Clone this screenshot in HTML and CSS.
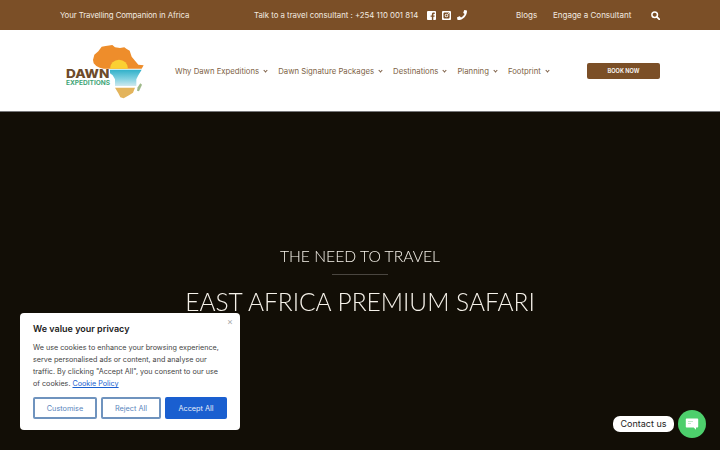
FILE: index.html
```html
<!DOCTYPE html>
<html lang="en">
<head>
    <meta charset="UTF-8">
    <meta name="viewport" content="width=device-width, initial-scale=1.0">
    <title>Dawn Expeditions</title>
    <link rel="stylesheet" href="styles.css">
</head>
<body>
    <!-- Top bar -->
    <div class="topbar">
        <span class="tagline">Your Travelling Companion in Africa</span>
        <span class="phone">Talk to a travel consultant : +254 110 001 814</span>
        <div class="social">
            <svg class="icon" viewBox="0 0 10 10"><path fill="currentColor" fill-rule="evenodd" d="M1.2 0h7.6C9.500 0 10 .5 10 1.2v7.600c0 .7-.5 1.200-1.200 1.200H7V6.400h1.300l.2-1.500H7V4c0-.5.2-.8.8-.8h.8V1.900C8.300 1.800 7.900 1.800 7.400 1.800 6.200 1.800 5.400 2.500 5.400 3.800v1.100H4v1.500h1.400V10H1.200C.5 10 0 9.500 0 8.800V1.200C0 .5.5 0 1.200 0z"/></svg>
            <svg class="icon" viewBox="0 0 10 10"><path fill="currentColor" fill-rule="evenodd" d="M1.200 0h7.600C9.500 0 10 .5 10 1.200v7.600c0 .7-.5 1.200-1.200 1.200H1.200C.5 10 0 9.500 0 8.800V1.200C0 .5.5 0 1.200 0zM3 1.600C2.200 1.600 1.600 2.200 1.600 3v4c0 .8.6 1.400 1.400 1.400h4c.8 0 1.400-.6 1.400-1.400V3c0-.8-.6-1.400-1.400-1.400zM5 3a2 2 0 1 1 0 4 2 2 0 0 1 0-4zm0 .9a1.100 1.100 0 1 0 0 2.200 1.100 1.100 0 0 0 0-2.200zM7.100 2.300a.6.6 0 1 1 0 1.200.6.6 0 0 1 0-1.200z"/></svg>
            <svg class="icon phone-icon" viewBox="0 0 10 10"><path fill="currentColor" d="M9.700.5 7.700 0c-.2 0-.4.1-.5.3l-.9 2.200c-.1.2 0 .4.1.5l1.200 1C7 5.300 5.300 7 4 7.600l-1-1.200c-.1-.1-.3-.2-.5-.1L.3 7.200c-.2.1-.3.3-.3.5l.5 2c0 .2.2.3.4.3C5.900 10 10 5.900 10 .9c0-.2-.1-.4-.3-.4z"/></svg>
        </div>
        <a class="top-link blogs" href="#">Blogs</a>
        <a class="top-link engage" href="#">Engage a Consultant</a>
        <svg class="icon search" viewBox="0 0 10 10"><circle cx="4.100" cy="4.100" r="3.100" fill="none" stroke="currentColor" stroke-width="1.700"/><path d="M6.500 6.500 9.300 9.300" stroke="currentColor" stroke-width="1.900" stroke-linecap="round"/></svg>
    </div>

    <!-- Main header -->
    <header class="header">
        <svg class="logo" viewBox="0 0 300 210">
            <defs>
                <linearGradient id="water" x1="0" y1="0" x2="0" y2="1">
                    <stop offset="0" stop-color="#2fb0c9"/>
                    <stop offset="0.55" stop-color="#7fd0e0"/>
                    <stop offset="1" stop-color="#cfe9ee"/>
                </linearGradient>
            </defs>
            <path fill="#ee8d2b" d="M114 72 118 56 130 46 140 32 152 30 172 27 180 34 195 36 208 34 214 38 224 44 230 62 240 74 250 86 266 88 260 98 165 98 146 98 134 95 124 90 116 82z"/>
            <path fill="#fbd033" d="M165 98a27 27 0 0 1 54 0z"/>
            <path fill="url(#water)" d="M165 101H260L250 118 244 130 244 150H180L180 130 173 118 165 112z"/>
            <path fill="#e3b45c" d="M180 155H240L234 170 222 178 206 187 196 184 190 172z"/>
            <path fill="#9fb98a" d="M256 142 261 146 252 166 246 164 248 154z"/>
            <text class="logo-dawn" x="33" y="125" textLength="130" lengthAdjust="spacingAndGlyphs">DAWN</text>
            <text class="logo-exp" x="33" y="148" textLength="132" lengthAdjust="spacingAndGlyphs">EXPEDITIONS</text>
        </svg>
        <nav class="nav">
            <a href="#">Why Dawn Expeditions <span class="caret"></span></a>
            <a href="#">Dawn Signature Packages <span class="caret"></span></a>
            <a href="#">Destinations <span class="caret"></span></a>
            <a href="#">Planning <span class="caret"></span></a>
            <a href="#">Footprint <span class="caret"></span></a>
        </nav>
        <a class="book" href="#">BOOK NOW</a>
    </header>

    <!-- Hero -->
    <section class="hero">
        <h2>THE NEED TO TRAVEL</h2>
        <div class="rule"></div>
        <h1>EAST AFRICA PREMIUM SAFARI</h1>
    </section>

    <!-- Cookie banner -->
    <div class="cookie">
        <span class="cookie-close">&times;</span>
        <h3>We value your privacy</h3>
        <p>We use cookies to enhance your browsing experience, serve personalised ads or content, and analyse our traffic. By clicking "Accept All", you consent to our use of cookies. <a href="#">Cookie Policy</a></p>
        <div class="cookie-buttons">
            <button class="btn-outline customise">Customise</button>
            <button class="btn-outline reject">Reject All</button>
            <button class="btn-solid">Accept All</button>
        </div>
    </div>

    <!-- Contact widget -->
    <div class="contact">
        <span class="contact-label">Contact us</span>
        <span class="contact-circle">
            <svg viewBox="0 0 14 14" width="14" height="14"><path fill="#fff" d="M1.500 1.500h11c.4 0 .7.3.7.700v7.600c0 .4-.3.7-.7.700H11v2.300L8.700 10.500H1.500c-.4 0-.7-.3-.7-.7V2.200c0-.4.3-.7.700-.7z"/><path fill="#bfe9c9" d="M3 4h5v1H3zM3 6h3v1H3z"/></svg>
        </span>
    </div>
</body>
</html>
```

FILE: styles.css
```css
/* Page */
body {
    margin: 0;
    height: 450px;
    overflow: hidden;
    display: flex;
    flex-direction: column;
    font-family: "Inter", "Liberation Sans", sans-serif;
    background-color: #120e06;
}

a {
    color: inherit;
    text-decoration: none;
}

/* Top bar */
.topbar {
    height: 30px;
    flex: none;
    display: flex;
    align-items: center;
    padding-left: 60px;
    background-color: #7b4f27;
    color: #f3ebe0;
    font-size: 7.800px;
    white-space: nowrap;
}

.tagline {
    width: 194px;
    letter-spacing: -0.08px;
}

.phone {
    width: 173px;
}

.social {
    display: flex;
    align-items: center;
    gap: 6px;
    width: 89px;
}

.icon {
    width: 9px;
    height: 9px;
    color: #fff;
}

.phone-icon {
    width: 10px;
    height: 10px;
}

.top-link {
    font-size: 8px;
}

.blogs {
    width: 37px;
}

.engage {
    width: 98px;
}

.search {
    width: 9px;
    height: 9px;
}

/* Header */
.header {
    height: 81px;
    flex: none;
    display: flex;
    align-items: center;
    background-color: #fff;
    border-bottom: 1px solid #77777a;
}

.logo {
    width: 100px;
    height: 70px;
    margin-left: 55px;
    flex: none;
}

.logo-dawn {
    font-family: "Inter", sans-serif;
    font-weight: 800;
    font-size: 34px;
    fill: #6d4a2a;
}

.logo-exp {
    font-family: "Inter", sans-serif;
    font-weight: 700;
    font-size: 19px;
    fill: #3fa577;
}

.nav {
    display: flex;
    gap: 11px;
    margin-left: 20px;
    width: 412px;
    font-size: 7.750px;
    color: #7d5f45;
    white-space: nowrap;
}

.nav a {
    display: flex;
    align-items: center;
    gap: 5px;
}

.caret {
    box-sizing: border-box;
    width: 3px;
    height: 3px;
    margin-top: -1px;
    border-right: 1px solid #7d5f45;
    border-bottom: 1px solid #7d5f45;
    transform: rotate(45deg);
}

.book {
    width: 73px;
    height: 16px;
    line-height: 16px;
    text-align: center;
    border-radius: 2px;
    background-color: #7b4f27;
    color: #fff;
    font-size: 5.600px;
    font-weight: 600;
}

/* Hero */
.hero {
    flex: 1;
    padding-top: 133px;
    text-align: center;
    color: #f6f2ea;
    font-family: "Lato", sans-serif;
    font-weight: 300;
}

.hero h2, .hero h1 {
    margin: 0;
    font-weight: 300;
    will-change: transform; /* keeps the big text free of colour fringes */
}

.hero h2 {
    font-size: 15.700px;
    line-height: 22px;
}

.rule {
    width: 56px;
    height: 1px;
    margin: 7px auto 12px;
    background-color: #4a4640;
}

.hero h1 {
    font-size: 24.500px;
    line-height: 30px;
}

/* Cookie banner */
.cookie {
    position: absolute;
    left: 20px;
    top: 313px;
    width: 194px;
    height: 99px;
    padding: 9px 13px;
    background-color: #fff;
    border-radius: 4px;
    color: #333;
}

.cookie-close {
    position: absolute;
    top: 4px;
    right: 7px;
    font-size: 9px;
    line-height: 9px;
    color: #a9a9a9;
}

.cookie h3 {
    margin: 0 0 6px;
    font-size: 9px;
    line-height: 14px;
    font-weight: 600;
    color: #222;
}

.cookie p {
    max-width: 188px;
    margin: 0;
    font-size: 7.200px;
    line-height: 12px;
    color: #444;
}

.cookie p a {
    color: #1a5fd0;
    text-decoration: underline;
}

.cookie-buttons {
    display: flex;
    gap: 4px;
    margin-top: 7px;
}

.cookie-buttons button {
    height: 22px;
    padding: 0;
    font-family: inherit;
    font-size: 7.300px;
    border-radius: 2px;
}

.btn-outline {
    background-color: #fff;
    border: 2px solid #6f93be;
    color: #5b86bd;
}

.customise {
    width: 64px;
}

.reject {
    width: 60px;
}

.btn-solid {
    width: 62px;
    border: none;
    background-color: #1a5fd0;
    color: #e6eefa;
}

/* Contact widget */
.contact {
    position: absolute;
    right: 14px;
    bottom: 12px;
    display: flex;
    align-items: center;
    gap: 4px;
}

.contact-label {
    width: 61px;
    height: 16px;
    line-height: 16px;
    text-align: center;
    border-radius: 7px;
    background-color: #fff;
    color: #222;
    font-size: 9px;
}

.contact-circle {
    width: 28px;
    height: 28px;
    display: flex;
    align-items: center;
    justify-content: center;
    border-radius: 50%;
    background-color: #4dcf6c;
}
```
